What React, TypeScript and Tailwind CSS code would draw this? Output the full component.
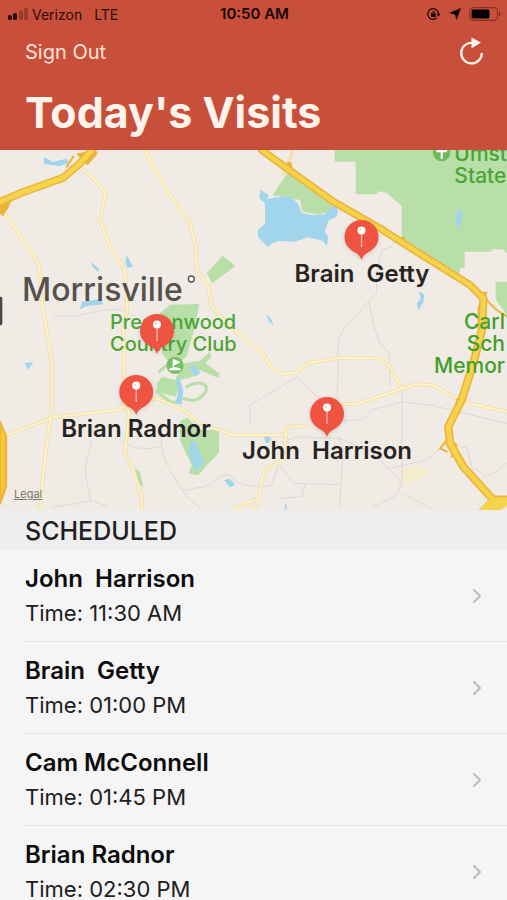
import React from "react";
import { ChevronRight } from "lucide-react";

const visits = [
  { name: "John  Harrison", time: "11:30 AM" },
  { name: "Brain  Getty", time: "01:00 PM" },
  { name: "Cam McConnell", time: "01:45 PM" },
  { name: "Brian Radnor", time: "02:30 PM" },
];

// centre of each pin on the map, with its label when it is shown
const markers = [
  { id: 1, label: "", place: "left-[157px] top-[163px]" },
  { id: 2, label: "Brain  Getty", place: "left-[362px] top-[69px]" },
  { id: 3, label: "Brian Radnor", place: "left-[136px] top-[224px]" },
  { id: 4, label: "John  Harrison", place: "left-[327px] top-[246px]" },
];

const StatusBar: React.FC = () => (
  <div className="grid grid-cols-3 items-center h-7 pl-2 pr-1.5 text-[#2b0c08]">
    <div className="flex items-center gap-1 text-[14px]">
      <svg viewBox="0 0 20 12" className="w-5 h-3" fill="currentColor">
        <rect x="0" y="7" width="4" height="5" rx="1.5" />
        <rect x="5" y="5" width="4" height="7" rx="1.5" />
        <rect x="11" y="3" width="4" height="9" rx="1.5" opacity="0.3" />
        <rect x="16" y="0" width="4" height="12" rx="1.5" opacity="0.3" />
      </svg>
      <span>Verizon</span>
      <span className="ml-2">LTE</span>
    </div>
    <p className="text-center text-[15px] leading-7 font-semibold text-[#180503]">10:50 AM</p>
    <div className="flex items-center justify-end gap-2 text-[#120302]">
      <svg viewBox="0 0 42 36" className="w-[14px] h-3" fill="none" stroke="currentColor" strokeWidth="3.5">
        <path d="M30 7A16 16 0 1 0 30 29M30 7Q35 12 35 18" />
        <path d="M28 17h13l-6.500 9z" fill="currentColor" stroke="none" />
        <rect x="12" y="16" width="14" height="11" rx="1" fill="currentColor" stroke="none" />
        <path d="M15 17v-3a4 4 0 0 1 8 0v3" strokeWidth="2.5" />
      </svg>
      <svg viewBox="0 0 12 12" className="w-3 h-3" fill="currentColor">
        <path d="M12 0 7.500 12 6 6.500 0 5z" />
      </svg>
      <svg viewBox="0 0 32 14" className="w-8 h-[14px]">
        <rect x="0.700" y="0.700" width="28" height="12.600" rx="3.500" fill="none" stroke="#7d2a1d" strokeWidth="1" />
        <rect x="2.500" y="2.500" width="18" height="9" rx="1.500" fill="#000" />
        <path d="M30 5c2 .5 2 3.500 0 4z" fill="#7d2a1d" />
      </svg>
    </div>
  </div>
);

const MapDrawing: React.FC = () => (
  <svg
    viewBox="0 0 1521 1080"
    preserveAspectRatio="xMinYMin slice"
    className="absolute inset-0 w-full h-full"
    fill="none"
    strokeLinecap="round"
    strokeLinejoin="round"
    aria-hidden="true"
  >
    {/* parks */}
    <g fill="#b9dfa9">
      <path d="M1004 0H1521V310L1510 298H1475V305H1394V352L1382 354L1374 385L1260 315L1205 270V168L1160 128L1132 124V133H1067V35H1004z" />
      <path d="M1486 395h35v102l-34-50z" />
      <path d="M862 70 818 135 900 150 908 185 960 195 1010 170z" />
      <path d="M668 317 706 348 636 400 620 370z" />
      <path d="M480 490 510 464 598 462 582 540 560 620 520 650 486 610z" />
      <path d="M540 815 560 802 600 840 657 840 657 908 622 944 594 976 566 970 575 945 556 905 540 870z" />
      <path d="M488 680 525 690 552 640 600 632 630 605 634 620 616 640 660 672 655 684 600 660 580 680 540 690 528 740 470 725 470 700z" />
      <path d="M403 955 420 965 430 1010 410 1000z" />
    </g>
    <path d="M552 745C580 760 600 750 618 725C625 700 600 690 560 710" stroke="#b9dfa9" strokeWidth="9" />
    <path d="M478 665 500 645M470 725 512 755 540 758" stroke="#b9dfa9" strokeWidth="9" />

    {/* lakes and ponds */}
    <g fill="#a0d5ec">
      <path d="M781 120 808 136 800 148 830 142 872 140 895 162 905 190 940 196 972 194 1000 165 1014 180 1010 200 985 212 975 245 985 262 980 288 968 272 925 262 885 275 838 273 815 280 805 292 775 262 773 240 795 222 795 160 778 145z" />
      <path d="M132 22 160 36 198 26 208 38 180 48 132 42z" />
      <path d="M275 336 298 358 294 366 278 350zM380 316 400 350 382 354 376 336z" />
      <path d="M240 478 245 455 305 447 310 463 262 468z" />
      <path d="M1370 182 1384 176 1388 195 1378 235 1366 222z" />
      <path d="M1256 423 1274 434 1270 456 1256 480 1250 462 1262 446zM797 492 812 505 822 526 808 516z" />
      <path d="M74 638 100 636 84 660zM528 680 540 690 550 720 545 764 526 760 534 730zM568 655 582 645 602 668 586 680z" />
      <path d="M575 872 590 876 598 905 612 940 584 962 574 930 566 900zM672 990 690 986 706 1004 690 1012z" />
      <path d="M792 862 804 858 815 866 806 880 798 880zM856 1056 862 1078H854z" />
    </g>
    <path d="M1206 955 1285 950 1290 965 1215 1010z" fill="#f4ecca" />

    {/* minor streets */}
    <g stroke="#dcdad5" strokeWidth="3">
      <path d="M160 494C230 512 280 480 330 478S380 490 400 496" />
      <path d="M275 870C270 900 250 950 258 980L272 1050M160 1072 275 1052 320 1068" />
      <path d="M360 868C400 900 440 900 480 890M485 870C480 920 520 980 560 1040L605 1078" />
      <path d="M550 1022 620 1008C650 1000 650 970 690 975 720 1010 740 1005 762 1008" />
      <path d="M750 820V765L762 758" />
      <path d="M1178 290 1145 300 1130 370 1130 430 1102 458 1030 540 1015 570 1012 760M1106 458 1125 540 1140 580 1168 610V640L1170 710" />
      <path d="M762 758 890 682 960 748M1030 812 1090 808 1120 778 1205 756 1290 765 1521 820M1206 722V1000M1015 860 1030 900 1018 1078" />
      <path d="M860 870 900 860 1020 866 1110 905 1170 960 1205 1000 1190 1035 1120 1070M1170 955 1280 930 1340 880" />
      <path d="M835 940 880 1000 1020 1004M762 1008H812L835 950M915 1005 905 1040 840 1045M1205 1030 1300 1078M1370 890 1400 892 1415 950 1460 980 1495 960 1521 940" />
    </g>

    {/* secondary roads */}
    <g stroke="#ecdfb0" strokeWidth="11">
      <path d="M12 185 118 345 124 440 140 540 155 640 155 780 135 920 120 1080M235 50 280 85 318 130 300 210 330 290 375 360 382 480 370 540 372 770 390 790M435 0 500 120 570 220 588 290 590 360 625 410 635 470 680 520 762 590 784 600 815 655 850 672 885 668 925 640 1010 624 1140 625 1170 650 1205 715" />
      <path d="M20 855 160 802 300 786 350 780 388 760 470 745 550 780 600 820 700 855H850L865 830 920 828M1030 762H1070L1250 702 1300 706 1390 755 1521 785M390 760 375 910 400 960 425 1040V1080M860 850 845 930 795 960 785 990 775 1050 762 1080M700 1080 762 1050" />
    </g>
    <g stroke="#fff2c4" strokeWidth="6">
      <path d="M12 185 118 345 124 440 140 540 155 640 155 780 135 920 120 1080M235 50 280 85 318 130 300 210 330 290 375 360 382 480 370 540 372 770 390 790M435 0 500 120 570 220 588 290 590 360 625 410 635 470 680 520 762 590 784 600 815 655 850 672 885 668 925 640 1010 624 1140 625 1170 650 1205 715" />
      <path d="M20 855 160 802 300 786 350 780 388 760 470 745 550 780 600 820 700 855H850L865 830 920 828M1030 762H1070L1250 702 1300 706 1390 755 1521 785M390 760 375 910 400 960 425 1040V1080M860 850 845 930 795 960 785 990 775 1050 762 1080M700 1080 762 1050" />
    </g>
    <path d="M880 0 850 75" stroke="#efe0ae" strokeWidth="8" />

    {/* highways */}
    <g stroke="#edb43c">
      <path d="M785 0 860 55 1000 155 1140 235 1250 305 1410 405 1450 445" strokeWidth="23" />
      <path d="M-10 160 60 130 190 83 240 40 275 0" strokeWidth="24" />
      <path d="M1450 445 1446 540 1420 640 1385 750 1345 830 1350 880 1390 950 1480 1050H1530" strokeWidth="25" />
      <path d="M1440 430 1490 480 1521 500M1436 470 1436 540M1340 905 1320 895 1345 865 1370 885 1355 920M1370 750 1400 725M1440 1080 1480 1040 1521 1040M220 20 200 50M250 10 290 10 262 42M5 145 35 142 8 195" strokeWidth="6" />
      <path d="M842 45 872 38 880 72zM1185 275 1210 262 1225 290zM1428 428 1460 428 1448 455zM0 150 36 144 20 178 0 192zM232 12 288 4 262 42z" fill="#edb43c" strokeWidth="5" />
      <path d="M0 815 18 860V1010L0 1060z" fill="#f7c933" strokeWidth="7" />
    </g>
    <g stroke="#f5d44c">
      <path d="M785 0 860 55 1000 155 1140 235 1250 305 1410 405 1450 445" strokeWidth="13" />
      <path d="M-10 160 60 130 190 83 240 40 275 0M1450 445 1446 540 1420 640 1385 750 1345 830 1350 880 1390 950 1480 1050H1530" strokeWidth="15" />
      <path d="M1440 1080 1475 1045H1521V1065L1500 1080z" fill="#f5d44c" strokeWidth="4" />
    </g>

    {/* point of interest badges */}
    <circle cx="1325" cy="8" r="26" fill="#6dba5c" />
    <path d="M1325 24V4M1312 4C1308-8 1342-8 1338 4z" stroke="#fff" strokeWidth="6" fill="#fff" />
    <circle cx="525" cy="646" r="26" fill="#79c065" />
    <path d="M520 659V629L538 637 520 645M509 659C514 652 536 652 541 659z" stroke="#fff" strokeWidth="4" fill="#fff" />
    <circle cx="574" cy="387" r="9" fill="#fff" stroke="#55504a" strokeWidth="4" />
    <path d="M0 440H3Q7 440 7 446V518Q7 526 0 526z" fill="#4a4845" />
  </svg>
);

const Pin: React.FC = () => (
  <svg viewBox="0 0 36 42" className="w-9 h-[42px] drop-shadow-sm" aria-hidden="true">
    <path d="M18 1a17 17 0 0 1 17 17c0 7-4.500 12.500-10.500 15.500C21.500 35 19.500 37 18 41c-1.500-4-3.500-6-6.500-7.500C5.500 30.500 1 25 1 18A17 17 0 0 1 18 1z" fill="#ef5443" />
    <path d="M18 12v16" stroke="#f9c9c0" strokeWidth="1.200" />
    <circle cx="18" cy="11.500" r="4" fill="#fff" />
    <circle cx="16.800" cy="10.500" r="1" fill="#f3c1b8" />
  </svg>
);

const VisitMap: React.FC = () => (
  <section className="relative h-[360px] shrink-0 overflow-hidden bg-[#f0ebe5]" aria-label="Visit map">
    <MapDrawing />
    <p className="absolute left-[22px] top-[122px] text-[32px] leading-9 font-medium text-[#55514d]">Morrisville</p>
    <div className="absolute left-[110px] top-[161px] text-[20px] leading-[22px] font-medium text-[#4ba535]">
      <p>Prestonwood</p>
      <p>Country Club</p>
    </div>
    <div className="absolute right-0 -top-[7px] text-[21px] leading-[22px] font-medium text-[#4ba535]">
      <p>Umst</p>
      <p>State</p>
    </div>
    <div className="absolute right-0.5 top-[161px] text-right text-[21px] leading-[22px] font-medium text-[#3fa028]">
      <p>Carl</p>
      <p>Sch</p>
      <p>Memor</p>
    </div>
    {markers.map((marker) => (
      <div key={marker.id} className={`absolute -translate-x-1/2 flex flex-col items-center ${marker.place}`}>
        <Pin />
        {marker.label && (
          <p className="text-[24px] leading-[26px] font-semibold text-[#262423] whitespace-pre">{marker.label}</p>
        )}
      </div>
    ))}
    <a href="#legal" className="absolute left-[14px] bottom-2 text-[11px] leading-4 text-[#77736f] underline">Legal</a>
  </section>
);

const App: React.FC = () => {
  return (
    <div className="h-screen flex flex-col overflow-hidden bg-[#f5f5f5] font-['Inter',sans-serif]">
      <header className="shrink-0 h-[150px] bg-[#c8503a]">
        <StatusBar />
        <div className="flex items-center justify-between h-12 pl-[25px] pr-5">
          <button type="button" className="text-[20px] text-[#fce3d6]">Sign Out</button>
          <button type="button" aria-label="Refresh">
            <svg viewBox="0 0 30 30" className="w-[30px] h-[30px]" fill="none">
              <path d="M15 5.800A10.300 10.300 0 1 0 24.800 16" stroke="#fff3ec" strokeWidth="2.300" />
              <path d="M14.500.5 24 5.500 14.500 11.500z" fill="#fff3ec" />
            </svg>
          </button>
        </div>
        <h1 className="pl-[25px] pt-2 text-[43px] leading-[56px] font-bold text-[#fff3ec]">Today's Visits</h1>
      </header>

      <VisitMap />

      <h2 className="shrink-0 h-10 px-[25px] bg-[#eeeeee] text-[25px] leading-[42px] font-medium text-[#1f1f1f]">SCHEDULED</h2>
      <ul className="grow overflow-y-auto [scrollbar-width:none] pl-[25px]">
        {visits.map((visit) => (
          <li key={visit.name} className="h-[92px] border-b border-[#e2e2e2]">
            <a href="#visit" className="flex items-center justify-between h-full pr-[18px]">
              <div>
                <p className="text-[24px] leading-[34px] font-semibold text-[#0c0c0c] whitespace-pre">{visit.name}</p>
                <p className="text-[22px] leading-[34px] text-[#202020]">Time: {visit.time}</p>
              </div>
              <ChevronRight className="w-6 h-6 text-[#bdbdbd]" strokeWidth={2} />
            </a>
          </li>
        ))}
      </ul>
    </div>
  );
};

export default App;
